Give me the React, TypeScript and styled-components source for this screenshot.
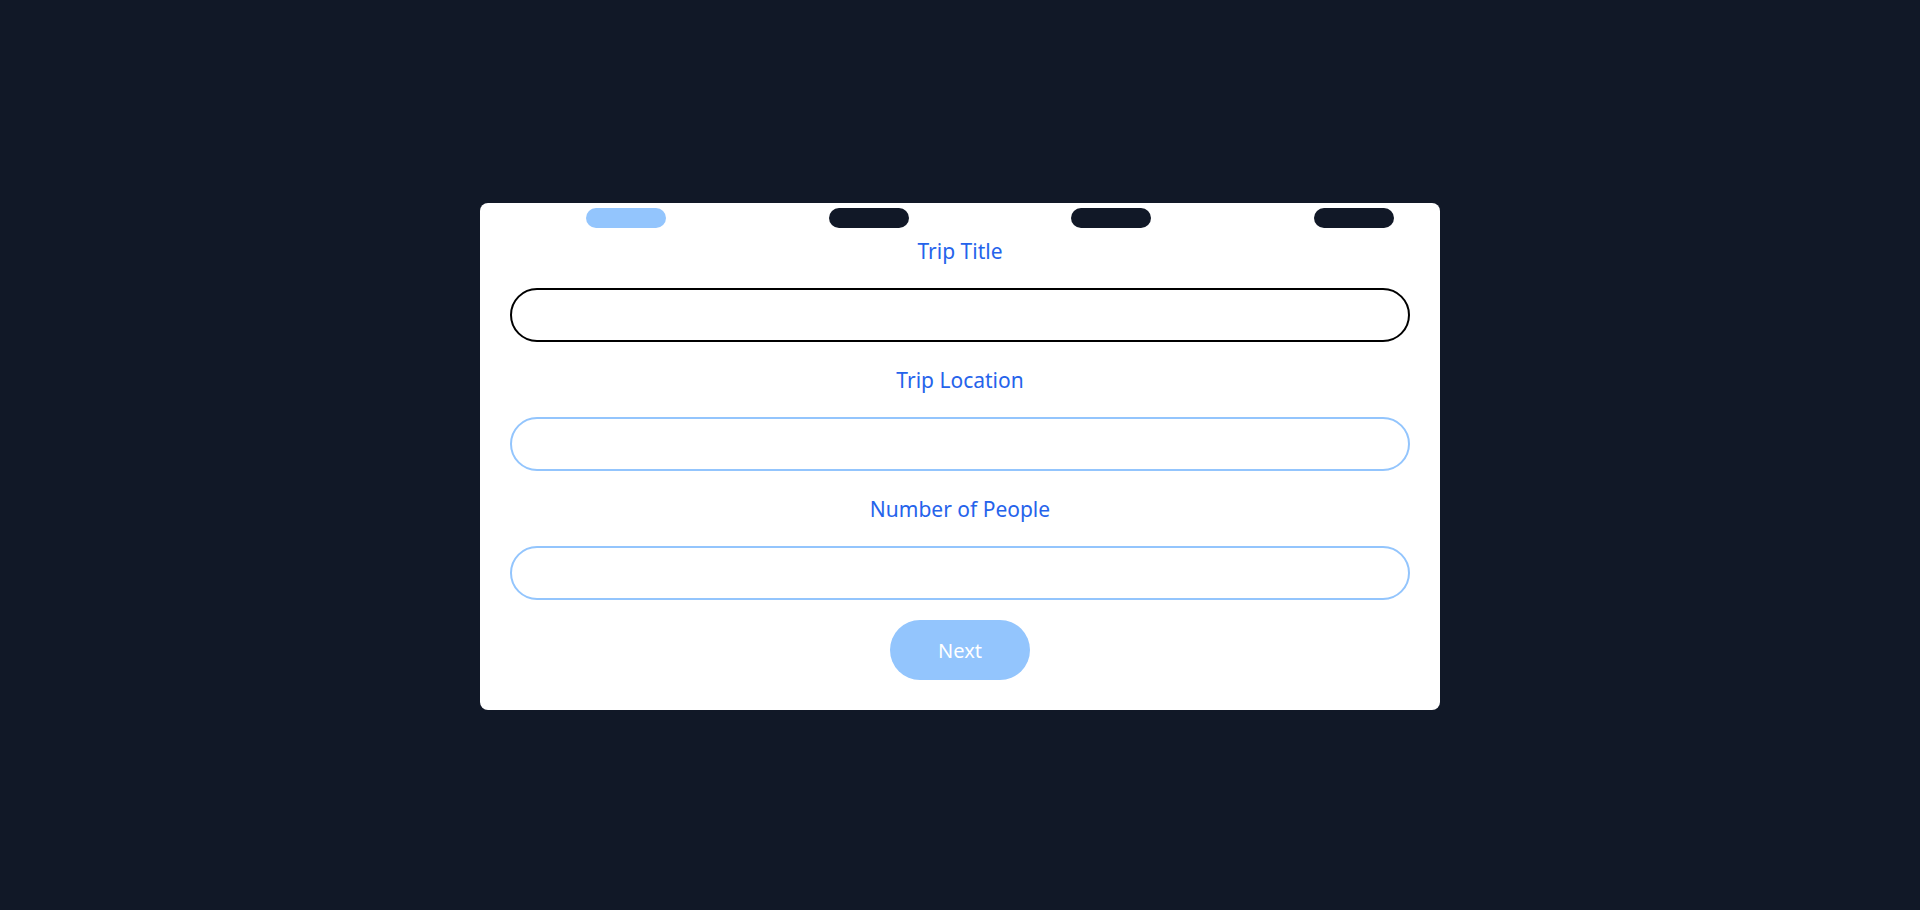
import { useState } from 'react';
import styled, { createGlobalStyle } from 'styled-components';

const GlobalStyle = createGlobalStyle`
  html, body {
    margin: 0;
    padding: 0;
    background: #111827;
    font-family: 'Noto Sans', 'Open Sans', sans-serif;
  }
  * {
    box-sizing: border-box;
  }
`;

const fields = ['Trip Title', 'Trip Location', 'Number of People'];

export default function App() {
  const [step] = useState<number>(0);
  const [values, setValues] = useState<string[]>(['', '', '']);

  return (
    <>
      <GlobalStyle />
      <Page>
        <Card>
          <StepRow>
            {[0, 1, 2, 3].map((i) => (
              <StepPill key={i} active={i === step} />
            ))}
          </StepRow>
          {fields.map((label, i) => (
            <Field key={label}>
              <Label>{label}</Label>
              <Input
                value={values[i]}
                focused={i === 0}
                autoFocus={i === 0}
                onChange={(e) => {
                  const next = [...values];
                  next[i] = e.target.value;
                  setValues(next);
                }}
              />
            </Field>
          ))}
          <NextButton>Next</NextButton>
        </Card>
      </Page>
    </>
  );
}

const Page = styled.div`
  min-height: 910px;
  display: flex;
  justify-content: center;
  align-items: flex-start;
  padding-top: 203px;
`;

const Card = styled.div`
  width: 960px;
  background: #ffffff;
  border-radius: 8px;
  padding: 5px 30px 30px 30px;
  display: flex;
  flex-direction: column;
  align-items: center;
`;

const StepRow = styled.div`
  width: 100%;
  display: flex;
  justify-content: space-between;
  padding: 0 16px 0 76px;
  margin-bottom: 7px;
`;

const StepPill = styled.div<{ active: boolean }>`
  width: 80px;
  height: 20px;
  border-radius: 10px;
  background: ${(props) => (props.active ? '#93c5fd' : '#111827')};
`;

const Field = styled.div`
  width: 100%;
  display: flex;
  flex-direction: column;
  align-items: center;
  margin-bottom: 22px;

  &:nth-of-type(4) {
    margin-bottom: 20px;
  }
`;

const Label = styled.label`
  font-size: 21px;
  line-height: 32px;
  color: #2563eb;
  margin-bottom: 21px;
`;

const Input = styled.input<{ focused: boolean }>`
  width: 100%;
  height: 54px;
  border-radius: 27px;
  border: 2px solid ${(props) => (props.focused ? '#000000' : '#93c5fd')};
  padding: 0 10px;
  font-size: 18px;
  font-family: inherit;
  outline: none;
  background: #ffffff;
`;

const NextButton = styled.button`
  width: 140px;
  height: 60px;
  border: none;
  border-radius: 30px;
  background: #93c5fd;
  color: #ffffff;
  font-family: inherit;
  font-size: 20px;
  cursor: pointer;
`;
